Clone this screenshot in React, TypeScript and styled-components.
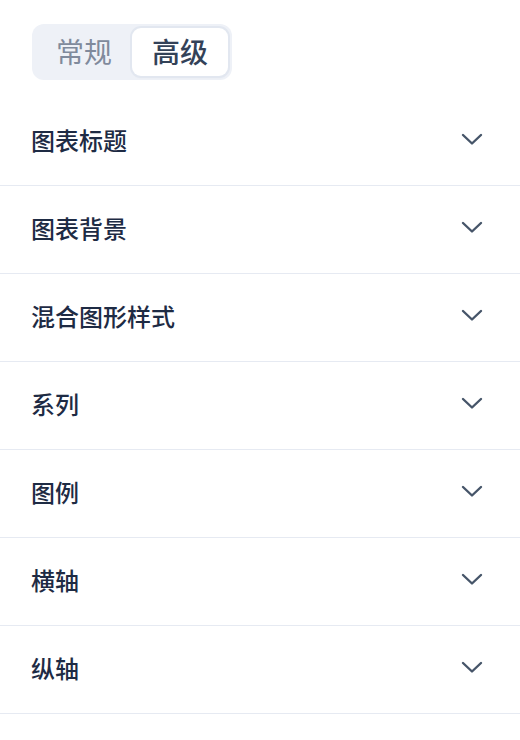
import * as React from "react"
import { useState } from "react"
import styled, { createGlobalStyle } from "styled-components"

const GlobalStyle = createGlobalStyle`
  html, body {
    margin: 0;
    padding: 0;
    background: #ffffff;
  }
  body {
    font-family: "Noto Sans CJK SC", "Noto Sans", sans-serif;
    -webkit-font-smoothing: antialiased;
  }
`

const Panel = styled.div`
  width: 520px;
  padding-top: 24px;
`

const TabBar = styled.div`
  display: grid;
  grid-template-columns: 1fr 1fr;
  width: 200px;
  height: 56px;
  box-sizing: border-box;
  padding: 4px;
  margin-left: 32px;
  border-radius: 12px;
  background: #eef1f7;
`

const Tab = styled.button<{ $active: boolean }>`
  border: none;
  margin: 0;
  padding: 0 0 3px;
  border-radius: 9px;
  font-family: "Noto Sans CJK SC", sans-serif;
  font-size: 28px;
  line-height: 1;
  cursor: pointer;
  background: ${(p) => (p.$active ? "#ffffff" : "transparent")};
  color: ${(p) => (p.$active ? "#334258" : "#808a9c")};
  font-weight: ${(p) => (p.$active ? 500 : 400)};
  box-shadow: ${(p) =>
    p.$active ? "0 0 0 2px #e2e7f0, 0 1px 3px rgba(30, 41, 59, 0.08)" : "none"};
`

const List = styled.div`
  margin-top: 18px;
`

const Row = styled.div`
  display: flex;
  align-items: center;
  justify-content: space-between;
  height: 88px;
  box-sizing: border-box;
  padding: 0 36px 5px 31px;
  border-bottom: 1px solid #e6eaf2;
  cursor: pointer;
`

const RowTitle = styled.span`
  font-size: 24px;
  font-weight: 500;
  color: #1e2b44;
`

const Chevron = () => (
  <svg width="24" height="24" viewBox="0 0 24 24" fill="none">
    <path
      d="M3 8 L12 16.5 L21 8"
      stroke="#465569"
      strokeWidth="2.4"
      strokeLinecap="round"
      strokeLinejoin="round"
    />
  </svg>
)

const sections = ["图表标题", "图表背景", "混合图形样式", "系列", "图例", "横轴", "纵轴"]

export default function App() {
  const [tab, setTab] = useState(1)

  return (
    <>
      <GlobalStyle />
      <Panel>
        <TabBar>
          {["常规", "高级"].map((label, i) => (
            <Tab key={label} $active={tab === i} onClick={() => setTab(i)}>
              {label}
            </Tab>
          ))}
        </TabBar>

        <List>
          {sections.map((name) => (
            <Row key={name}>
              <RowTitle>{name}</RowTitle>
              <Chevron />
            </Row>
          ))}
        </List>
      </Panel>
    </>
  )
}
